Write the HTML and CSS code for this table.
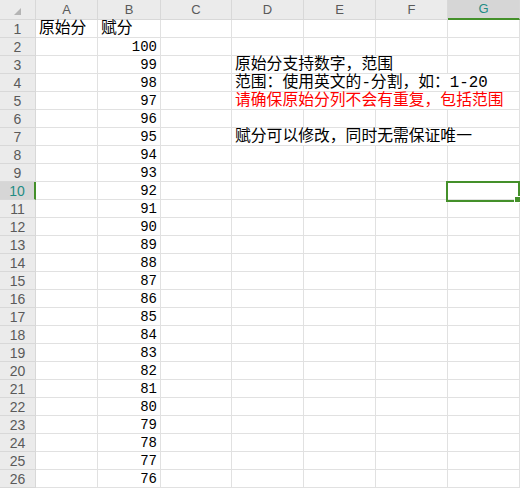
FILE: index.html
```html
<!DOCTYPE html>
<html lang="zh">
<head>
<meta charset="utf-8">
<link rel="stylesheet" href="styles.css">
</head>
<body>
<div class="wrap">
<div class="sheet">
  <div class="hd corner"><svg class="tri" width="8" height="8" viewBox="0 0 8 8"><polygon points="7,0 7,7 0,7" fill="#b4b4b4"/></svg></div>
  <div class="hd col">A</div><div class="hd col">B</div><div class="hd col">C</div><div class="hd col">D</div><div class="hd col">E</div><div class="hd col">F</div><div class="hd col sel">G</div>

  <div class="rh">1</div><div class="c">原始分</div><div class="c">赋分</div><div class="c"></div><div class="c"></div><div class="c"></div><div class="c"></div><div class="c"></div>
  <div class="rh">2</div><div class="c"></div><div class="c n">100</div><div class="c"></div><div class="c"></div><div class="c"></div><div class="c"></div><div class="c"></div>
  <div class="rh">3</div><div class="c"></div><div class="c n">99</div><div class="c"></div><div class="c t span3">原始分支持数字，范围</div><div class="c"></div>
  <div class="rh">4</div><div class="c"></div><div class="c n">98</div><div class="c"></div><div class="c t span4">范围：使用英文的-分割，如：1-20</div>
  <div class="rh">5</div><div class="c"></div><div class="c n">97</div><div class="c"></div><div class="c t red span4">请确保原始分列不会有重复，包括范围</div>
  <div class="rh">6</div><div class="c"></div><div class="c n">96</div><div class="c"></div><div class="c"></div><div class="c"></div><div class="c"></div><div class="c"></div>
  <div class="rh">7</div><div class="c"></div><div class="c n">95</div><div class="c"></div><div class="c t span4">赋分可以修改，同时无需保证唯一</div>
  <div class="rh">8</div><div class="c"></div><div class="c n">94</div><div class="c"></div><div class="c"></div><div class="c"></div><div class="c"></div><div class="c"></div>
  <div class="rh">9</div><div class="c"></div><div class="c n">93</div><div class="c"></div><div class="c"></div><div class="c"></div><div class="c"></div><div class="c"></div>
  <div class="rh selrow">10</div><div class="c"></div><div class="c n">92</div><div class="c"></div><div class="c"></div><div class="c"></div><div class="c"></div><div class="c selcell"><span class="box"><span class="handle"></span></span></div>
  <div class="rh">11</div><div class="c"></div><div class="c n">91</div><div class="c"></div><div class="c"></div><div class="c"></div><div class="c"></div><div class="c"></div>
  <div class="rh">12</div><div class="c"></div><div class="c n">90</div><div class="c"></div><div class="c"></div><div class="c"></div><div class="c"></div><div class="c"></div>
  <div class="rh">13</div><div class="c"></div><div class="c n">89</div><div class="c"></div><div class="c"></div><div class="c"></div><div class="c"></div><div class="c"></div>
  <div class="rh">14</div><div class="c"></div><div class="c n">88</div><div class="c"></div><div class="c"></div><div class="c"></div><div class="c"></div><div class="c"></div>
  <div class="rh">15</div><div class="c"></div><div class="c n">87</div><div class="c"></div><div class="c"></div><div class="c"></div><div class="c"></div><div class="c"></div>
  <div class="rh">16</div><div class="c"></div><div class="c n">86</div><div class="c"></div><div class="c"></div><div class="c"></div><div class="c"></div><div class="c"></div>
  <div class="rh">17</div><div class="c"></div><div class="c n">85</div><div class="c"></div><div class="c"></div><div class="c"></div><div class="c"></div><div class="c"></div>
  <div class="rh">18</div><div class="c"></div><div class="c n">84</div><div class="c"></div><div class="c"></div><div class="c"></div><div class="c"></div><div class="c"></div>
  <div class="rh">19</div><div class="c"></div><div class="c n">83</div><div class="c"></div><div class="c"></div><div class="c"></div><div class="c"></div><div class="c"></div>
  <div class="rh">20</div><div class="c"></div><div class="c n">82</div><div class="c"></div><div class="c"></div><div class="c"></div><div class="c"></div><div class="c"></div>
  <div class="rh">21</div><div class="c"></div><div class="c n">81</div><div class="c"></div><div class="c"></div><div class="c"></div><div class="c"></div><div class="c"></div>
  <div class="rh">22</div><div class="c"></div><div class="c n">80</div><div class="c"></div><div class="c"></div><div class="c"></div><div class="c"></div><div class="c"></div>
  <div class="rh">23</div><div class="c"></div><div class="c n">79</div><div class="c"></div><div class="c"></div><div class="c"></div><div class="c"></div><div class="c"></div>
  <div class="rh">24</div><div class="c"></div><div class="c n">78</div><div class="c"></div><div class="c"></div><div class="c"></div><div class="c"></div><div class="c"></div>
  <div class="rh">25</div><div class="c"></div><div class="c n">77</div><div class="c"></div><div class="c"></div><div class="c"></div><div class="c"></div><div class="c"></div>
  <div class="rh">26</div><div class="c"></div><div class="c n">76</div><div class="c"></div><div class="c"></div><div class="c"></div><div class="c"></div><div class="c"></div>
</div>
</div>
</body>
</html>
```
FILE: styles.css
```css
html, body {
  margin: 0;
  padding: 0;
  background: #ffffff;
  overflow: hidden;
}
.wrap {
  width: 521px;
  height: 488px;
  overflow: hidden;
}
.sheet {
  display: grid;
  grid-template-columns: 36px 62px 63px 71px 72px 72px 72px 72px;
  grid-template-rows: 20px;
  grid-auto-rows: 18px;
  width: 520px;
}
.sheet > div {
  box-sizing: border-box;
  border-right: 1px solid #e1e1e1;
  border-bottom: 1px solid #e1e1e1;
  white-space: nowrap;
}
.hd {
  background: #ebebeb;
  color: #5a5a5a;
  font-family: "Liberation Sans", Arial, sans-serif;
  font-size: 13px;
  line-height: 19px;
  text-align: center;
  border-color: #d8d8d8 !important;
}
.corner {
  position: relative;
}
.tri {
  position: absolute;
  left: 14px;
  top: 8px;
}
.col.sel {
  background: #d6d6d6;
  color: #1f8c84;
  border-bottom: 2px solid #44902a !important;
  line-height: 18px;
}
.rh {
  background: #ebebeb;
  color: #5a5a5a;
  font-family: "Liberation Sans", Arial, sans-serif;
  font-size: 14px;
  line-height: 18px;
  text-align: center;
  border-color: #d8d8d8 !important;
}
.rh.selrow {
  background: #d6d6d6;
  color: #1f8c84;
  border-right: 2px solid #44902a !important;
}
.c {
  font-family: "Liberation Mono", "Noto Sans CJK SC", monospace;
  font-size: 15.8px;
  line-height: 18px;
  color: #000000;
  padding: 0 3px;
  overflow: visible;
}
.c.n {
  text-align: right;
  font-size: 14px;
  padding-right: 3px;
}
.c.t {
  padding-left: 3px;
}
.span3 {
  grid-column: span 3;
}
.span4 {
  grid-column: span 4;
}
.red {
  color: #ff0000;
}
.selcell {
  position: relative;
}
.box {
  position: absolute;
  left: -2px;
  top: -1px;
  width: 74px;
  height: 21px;
  box-sizing: border-box;
  border: 2px solid #44902a;
}
.handle {
  position: absolute;
  right: -3px;
  bottom: -3px;
  width: 5px;
  height: 5px;
  background: #44902a;
  border: 1px solid #ffffff;
}
```
